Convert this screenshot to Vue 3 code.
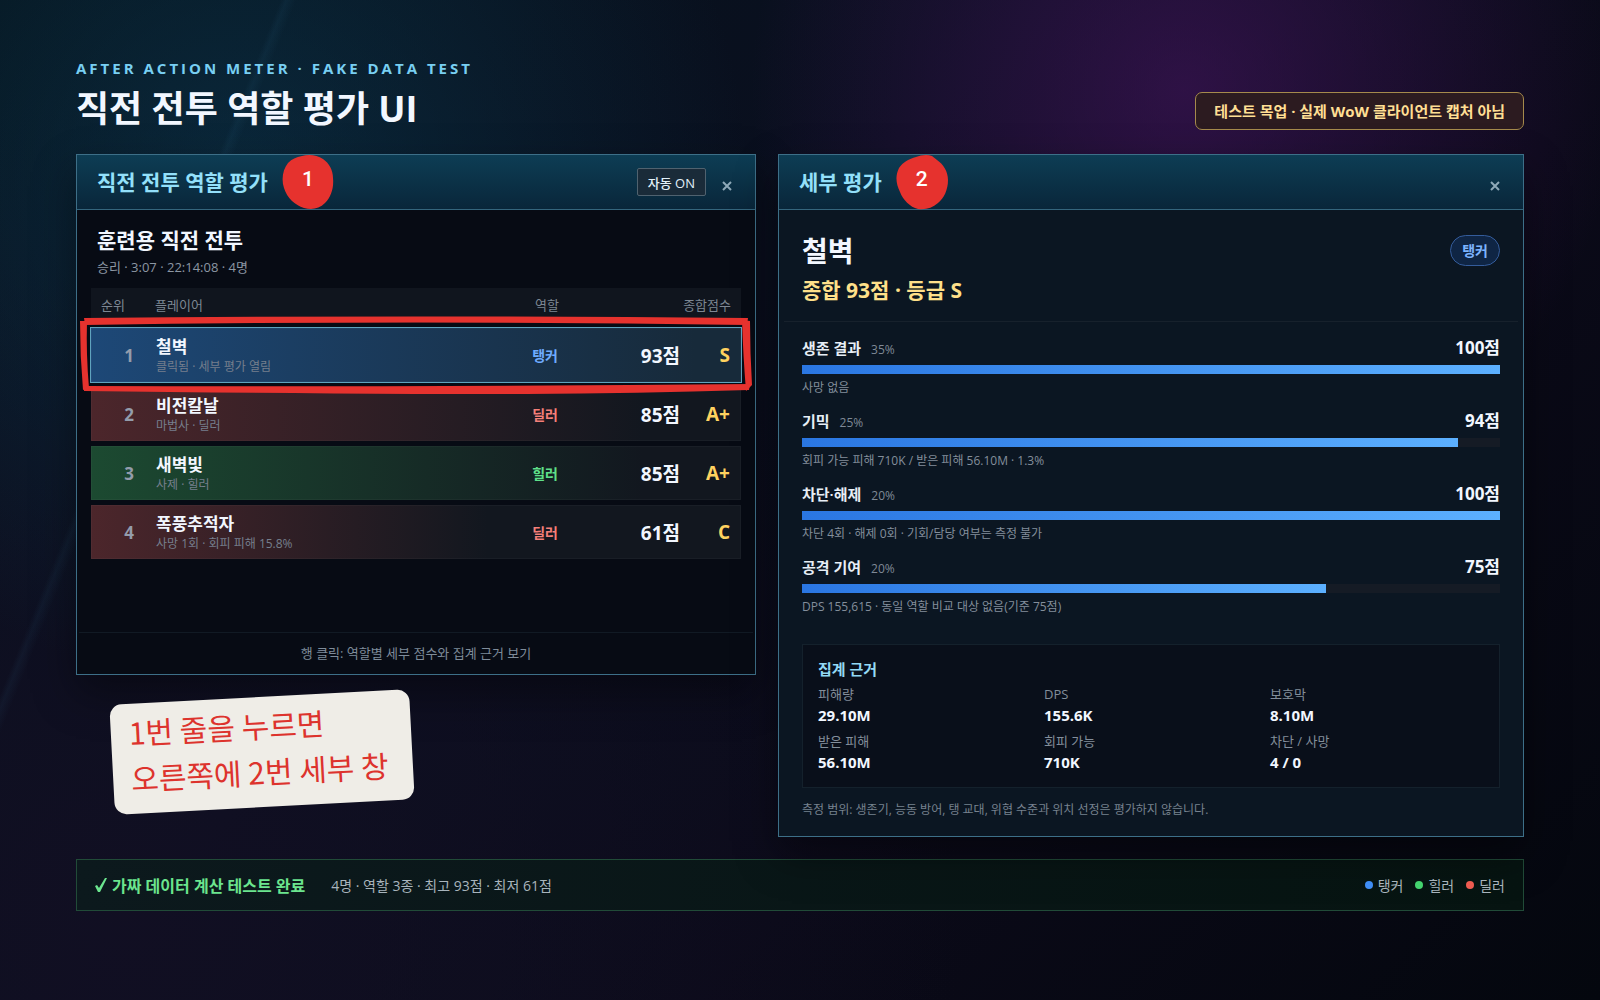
<script setup>
const players = [
  { rank: 1, name: '철벽', note: '클릭됨 · 세부 평가 열림', role: '탱커', kind: 'tank', score: 93, grade: 'S', selected: true },
  { rank: 2, name: '비전칼날', note: '마법사 · 딜러', role: '딜러', kind: 'dps', score: 85, grade: 'A+' },
  { rank: 3, name: '새벽빛', note: '사제 · 힐러', role: '힐러', kind: 'heal', score: 85, grade: 'A+' },
  { rank: 4, name: '폭풍추적자', note: '사망 1회 · 회피 피해 15.8%', role: '딜러', kind: 'dps', score: 61, grade: 'C' },
]

const metrics = [
  { label: '생존 결과', weight: 35, score: 100, note: '사망 없음' },
  { label: '기믹', weight: 25, score: 94, note: '회피 가능 피해 710K / 받은 피해 56.10M · 1.3%' },
  { label: '차단·해제', weight: 20, score: 100, note: '차단 4회 · 해제 0회 · 기회/담당 여부는 측정 불가' },
  { label: '공격 기여', weight: 20, score: 75, note: 'DPS 155,615 · 동일 역할 비교 대상 없음(기준 75점)' },
]

const evidence = [
  { label: '피해량', value: '29.10M' },
  { label: 'DPS', value: '155.6K' },
  { label: '보호막', value: '8.10M' },
  { label: '받은 피해', value: '56.10M' },
  { label: '회피 가능', value: '710K' },
  { label: '차단 / 사망', value: '4 / 0' },
]

const legend = [
  { label: '탱커', kind: 'tank' },
  { label: '힐러', kind: 'heal' },
  { label: '딜러', kind: 'dps' },
]
</script>

<template>
  <div class="page">
    <header class="top">
      <div>
        <p class="eyebrow">AFTER ACTION METER · FAKE DATA TEST</p>
        <h1>직전 전투 역할 평가 UI</h1>
      </div>
      <p class="notice">테스트 목업 · 실제 WoW 클라이언트 캡처 아님</p>
    </header>

    <main class="columns">
      <div class="left">
        <section class="panel ranking">
          <header class="bar">
            <h2>직전 전투 역할 평가</h2>
            <span class="marker">
              <svg viewBox="0 0 52 56" aria-hidden="true"><path d="M20 2C27 0 35 1 41 5C47 9 51 16 51 24C52 34 49 43 43 49C37 55 30 56 22 54C13 51 5 44 2 34C-1 25 1 15 6 9C10 5 14 3 20 2Z" /></svg>
              <b>1</b>
            </span>
            <button class="toggle" type="button">자동 ON</button>
            <button class="close" type="button" aria-label="닫기">
              <svg viewBox="0 0 12 12" aria-hidden="true"><path d="M2 2L10 10M10 2L2 10" /></svg>
            </button>
          </header>

          <div class="fight">
            <h3>훈련용 직전 전투</h3>
            <p>승리 · 3:07 · 22:14:08 · 4명</p>
          </div>

          <table class="list">
            <thead>
              <tr>
                <th class="h-rank" scope="col">순위</th>
                <th class="h-name" scope="col">플레이어</th>
                <th class="h-role" scope="col">역할</th>
                <th class="h-score" scope="col" colspan="2">종합점수</th>
              </tr>
            </thead>
            <tbody>
              <tr
                v-for="p in players"
                :key="p.rank"
                :class="[p.kind, { selected: p.selected }]"
                :style="{ '--reach': p.score + '%' }"
              >
                <td class="rank">{{ p.rank }}</td>
                <td class="player">
                  <strong>{{ p.name }}</strong>
                  <small>{{ p.note }}</small>
                </td>
                <td class="role">{{ p.role }}</td>
                <td class="score">{{ p.score }}점</td>
                <td class="grade">
                  {{ p.grade }}
                  <svg v-if="p.selected" class="sketch" viewBox="0 0 672 78" preserveAspectRatio="none" aria-hidden="true">
                    <path d="M4 2Q336 -1 668 2L667 9Q336 4 5 9Z" />
                    <path d="M0 5L7 5Q6 38 9 72L3 74Q0 40 0 5Z" />
                    <path d="M662 4L670 5Q670 36 672 69L666 75Q663 38 662 4Z" />
                    <path d="M4 70Q336 71 670 68L669 74Q500 79 336 78Q160 77 4 75Z" />
                  </svg>
                </td>
              </tr>
            </tbody>
          </table>

          <footer class="hint">행 클릭: 역할별 세부 점수와 집계 근거 보기</footer>
        </section>

        <p class="sticky">1번 줄을 누르면<br />오른쪽에 2번 세부 창</p>
      </div>

      <section class="panel detail">
        <header class="bar">
          <h2>세부 평가</h2>
          <span class="marker">
            <svg viewBox="0 0 52 56" aria-hidden="true"><path d="M20 3C25 1 31 0 36 2L41 6C47 10 52 17 52 26C52 36 48 44 42 49C36 54 30 56 22 55C14 53 7 46 4 38C0 30 -1 22 3 14C7 8 13 5 20 3Z" /></svg>
            <b>2</b>
          </span>
          <button class="close" type="button" aria-label="닫기">
            <svg viewBox="0 0 12 12" aria-hidden="true"><path d="M2 2L10 10M10 2L2 10" /></svg>
          </button>
        </header>

        <div class="summary">
          <div>
            <h3>철벽</h3>
            <p>종합 93점 · 등급 S</p>
          </div>
          <span class="badge">탱커</span>
        </div>

        <ul class="metrics">
          <li v-for="m in metrics" :key="m.label">
            <div class="line">
              <span class="label">{{ m.label }}</span>
              <span class="weight">{{ m.weight }}%</span>
              <strong>{{ m.score }}점</strong>
            </div>
            <div class="track"><div class="fill" :style="{ width: m.score + '%' }"></div></div>
            <p>{{ m.note }}</p>
          </li>
        </ul>

        <div class="evidence">
          <h4>집계 근거</h4>
          <dl>
            <div v-for="e in evidence" :key="e.label">
              <dt>{{ e.label }}</dt>
              <dd>{{ e.value }}</dd>
            </div>
          </dl>
        </div>

        <p class="scope">측정 범위: 생존기, 능동 방어, 탱 교대, 위협 수준과 위치 선정은 평가하지 않습니다.</p>
      </section>
    </main>

    <footer class="status">
      <svg class="check" viewBox="0 0 12 16" aria-hidden="true"><path d="M0 9L2 8L4 11L10 1L12 1L5 15L3 15Z" /></svg>
      <strong>가짜 데이터 계산 테스트 완료</strong>
      <span class="counts">4명 · 역할 3종 · 최고 93점 · 최저 61점</span>
      <ul class="legend">
        <li v-for="l in legend" :key="l.kind" :class="l.kind">{{ l.label }}</li>
      </ul>
    </footer>
  </div>
</template>

<style>
body {
  margin: 0;
  background: #070a14;
}
</style>

<style scoped>
* {
  box-sizing: border-box;
}

.page {
  min-height: 100vh;
  padding: 56px 76px 88px;
  color: #f2f7ff;
  font-family: 'Open Sans', 'Noto Sans CJK KR', sans-serif;
  background:
    linear-gradient(112deg, transparent 14%, rgba(70, 160, 210, 0.06) 14.3%, transparent 14.8%),
    radial-gradient(circle at 15% 18%, rgba(12, 62, 88, 0.5), transparent 32%),
    radial-gradient(circle at 74% 9%, rgba(70, 20, 96, 0.6), transparent 29%),
    radial-gradient(circle at 8% 92%, rgba(18, 15, 35, 0.9), transparent 48%),
    linear-gradient(135deg, #06131c 0%, #0a0f1f 40%, #0b0a19 65%, #04070e 100%);
}

h1, h2, h3, h4, p, ul, dl, dd {
  margin: 0;
  padding: 0;
}

ul {
  list-style: none;
}

button {
  font-family: inherit;
  cursor: pointer;
}

.top {
  display: flex;
  justify-content: space-between;
  align-items: flex-end;
  margin-bottom: 20px;
}

.eyebrow {
  color: #78cff2;
  font-size: 15px;
  font-weight: 700;
  line-height: 24px;
  letter-spacing: 3px;
}

h1 {
  margin-top: 4px;
  font-size: 36px;
  font-weight: 700;
  line-height: 50px;
}

.notice {
  margin-bottom: 4px;
  padding: 7px 18px;
  border: 1px solid #a58a4c;
  border-radius: 7px;
  background: #2c1b20;
  color: #ffdf94;
  font-size: 15px;
  font-weight: 700;
  line-height: 22px;
}

.columns {
  display: grid;
  grid-template-columns: 680fr 746fr;
  gap: 22px;
}

.panel {
  display: flex;
  flex-direction: column;
  border: 1px solid #3d6f88;
  box-shadow: 0 18px 40px rgba(0, 0, 0, 0.4);
}

.ranking {
  min-height: 521px;
  background: #070b14;
}

.detail {
  background: #0b1622;
}

.bar {
  display: flex;
  align-items: center;
  height: 55px;
  padding: 0 20px;
  border-bottom: 1px solid #34657d;
  background: linear-gradient(#0d3d54, #09263a);
}

.bar h2 {
  color: #93e0fa;
  font-size: 21px;
  font-weight: 700;
  line-height: 28px;
}

.marker {
  position: relative;
  display: grid;
  place-items: center;
  width: 52px;
  height: 56px;
  margin-left: 14px;
}

.marker svg {
  position: absolute;
  inset: 0;
  fill: #e6322e;
}

.marker b {
  position: relative;
  padding-bottom: 6px;
  color: #fff;
  font-family: Roboto, sans-serif;
  font-size: 21px;
  font-weight: 500;
  line-height: 24px;
}

.toggle {
  height: 28px;
  margin-left: auto;
  padding: 0 10px;
  border: 1px solid #50626f;
  border-radius: 2px;
  background: #1a2b39;
  color: #e2f1fa;
  font-size: 13px;
  font-weight: 500;
}

.close {
  width: 12px;
  height: 12px;
  margin: 8px 2px 0 15px;
  padding: 0;
  border: 0;
  background: none;
}

.detail .close {
  margin-left: auto;
}

.close svg {
  display: block;
  fill: none;
  stroke: #8fa9b8;
  stroke-width: 2;
}

.fight {
  padding: 15px 20px 10px;
}

.fight h3 {
  font-size: 21px;
  font-weight: 700;
  line-height: 31px;
}

.fight p {
  color: #8c96a3;
  font-size: 13px;
  line-height: 22px;
}

.list {
  display: block;
  padding: 0 14px;
}

.list thead {
  display: block;
  margin-bottom: 5px;
}

.list tbody {
  display: flex;
  flex-direction: column;
  gap: 5px;
}

.list tr {
  position: relative;
  display: grid;
  grid-template-columns: 32px 1fr 100px 122px 50px;
  align-items: center;
  padding: 0 10px;
}

.list thead tr {
  height: 35px;
  background: #10151e;
}

.list th {
  padding: 0 0 2px;
  color: #7d8793;
  font-size: 13px;
  font-weight: 400;
  line-height: 20px;
  text-align: left;
}

.list .h-name {
  padding-left: 22px;
}

.list .h-role {
  text-align: right;
}

.list .h-score {
  grid-column: span 2;
  text-align: right;
}

.list tbody tr {
  height: 54px;
  border: 1px solid rgba(255, 255, 255, 0.03);
  background:
    linear-gradient(90deg, var(--tint), transparent var(--reach)) border-box,
    #12171f;
}

.list tbody .tank {
  --tint: #1d4877;
  --tone: #6fabff;
}

.list tbody .heal {
  --tint: #1c4a31;
  --tone: #5fe08a;
}

.list tbody .dps {
  --tint: #4c262b;
  --tone: #f47f79;
}

.list tbody .selected {
  z-index: 1;
  background:
    linear-gradient(90deg, var(--tint), transparent var(--reach)) border-box,
    #172a3a;
  outline: 1px solid #5fa3be;
}

.list td {
  padding: 0;
}

.rank {
  color: #939cab;
  font-size: 17px;
  font-weight: 700;
  text-align: right;
}

.list .player {
  padding-left: 22px;
}

.player strong,
.player small {
  display: block;
}

.player strong {
  font-size: 17px;
  font-weight: 700;
  line-height: 23px;
}

.player small {
  color: #767f8d;
  font-size: 12px;
  line-height: 17px;
}

.role {
  color: var(--tone);
  font-size: 14px;
  font-weight: 600;
  text-align: right;
}

.score,
.grade {
  font-size: 19px;
  font-weight: 700;
  text-align: right;
}

.grade {
  color: #ffd25f;
}

.sketch {
  position: absolute;
  top: -13px;
  left: -12px;
  width: calc(100% + 24px);
  height: 78px;
  fill: #e6322e;
}

.hint {
  margin: auto 2px 0;
  border-top: 1px solid #111a24;
  color: #7f8c9a;
  font-size: 13px;
  line-height: 41px;
  text-align: center;
}

.sticky {
  width: 300px;
  margin: 22px 0 0 36px;
  padding: 5px 18px 13px;
  border-radius: 12px;
  background: #efede7;
  color: #dd332d;
  font-family: 'Noto Sans CJK KR', sans-serif;
  font-size: 30px;
  font-weight: 400;
  line-height: 46px;
  white-space: nowrap;
  transform: rotate(-3deg);
}

.summary {
  display: flex;
  justify-content: space-between;
  align-items: flex-start;
  margin: 0 5px;
  padding: 20px 18px 12px;
  border-bottom: 1px solid #17212c;
}

.summary h3 {
  font-size: 28px;
  font-weight: 700;
  line-height: 42px;
}

.summary p {
  color: #ffe08a;
  font-size: 21px;
  font-weight: 700;
  line-height: 37px;
}

.badge {
  margin-top: 5px;
  padding: 0 11px;
  border: 1px solid #345c9b;
  border-radius: 16px;
  background: #0f2544;
  color: #7db4ff;
  font-size: 14px;
  font-weight: 600;
  line-height: 29px;
}

.metrics {
  display: grid;
  gap: 11px;
  padding: 13px 23px 0;
}

.line {
  display: flex;
  align-items: baseline;
  height: 30px;
  line-height: 26px;
}

.label {
  color: #e7eef6;
  font-size: 15px;
  font-weight: 600;
}

.weight {
  margin-left: 10px;
  color: #7f8996;
  font-size: 12px;
}

.line strong {
  margin-left: auto;
  font-size: 17px;
  font-weight: 700;
}

.track {
  height: 9px;
  background: #151b25;
}

.fill {
  height: 100%;
  background: linear-gradient(90deg, #2a76e2, #5cb0ff);
}

.metrics p {
  padding-top: 5px;
  color: #838e9b;
  font-size: 12px;
  line-height: 18px;
}

.evidence {
  margin: 28px 23px 0;
  padding: 12px 15px 14px;
  border: 1px solid #14212c;
  background: #090f1a;
}

.evidence h4 {
  color: #93d9f5;
  font-size: 15px;
  font-weight: 700;
  line-height: 24px;
}

.evidence dl {
  display: grid;
  grid-template-columns: repeat(3, 1fr);
  gap: 5px 12px;
  padding-top: 3px;
}

.evidence dt {
  color: #838e9b;
  font-size: 13px;
  line-height: 21px;
}

.evidence dd {
  font-size: 15px;
  font-weight: 700;
  line-height: 21px;
}

.scope {
  padding: 13px 23px 17px;
  color: #77828f;
  font-size: 12px;
  line-height: 18px;
}

.status {
  display: flex;
  align-items: center;
  height: 52px;
  margin-top: 22px;
  padding: 0 18px;
  border: 1px solid #214b38;
  background: linear-gradient(90deg, #0c191d, #061411);
}

.check {
  width: 12px;
  height: 16px;
  margin-right: 5px;
  fill: #6be58e;
}

.status strong {
  color: #6be58e;
  font-size: 16px;
  font-weight: 700;
}

.counts {
  margin-left: 26px;
  color: #a8b4bc;
  font-size: 14px;
}

.legend {
  display: flex;
  gap: 12px;
  margin-left: auto;
  color: #a8b4bc;
  font-size: 14px;
}

.legend li {
  display: flex;
  align-items: center;
  gap: 5px;
}

.legend li::before {
  content: '';
  width: 8px;
  height: 8px;
  border-radius: 50%;
  background: var(--dot);
}

.legend .tank {
  --dot: #3f8df5;
}

.legend .heal {
  --dot: #43d36e;
}

.legend .dps {
  --dot: #ee5b50;
}
</style>
